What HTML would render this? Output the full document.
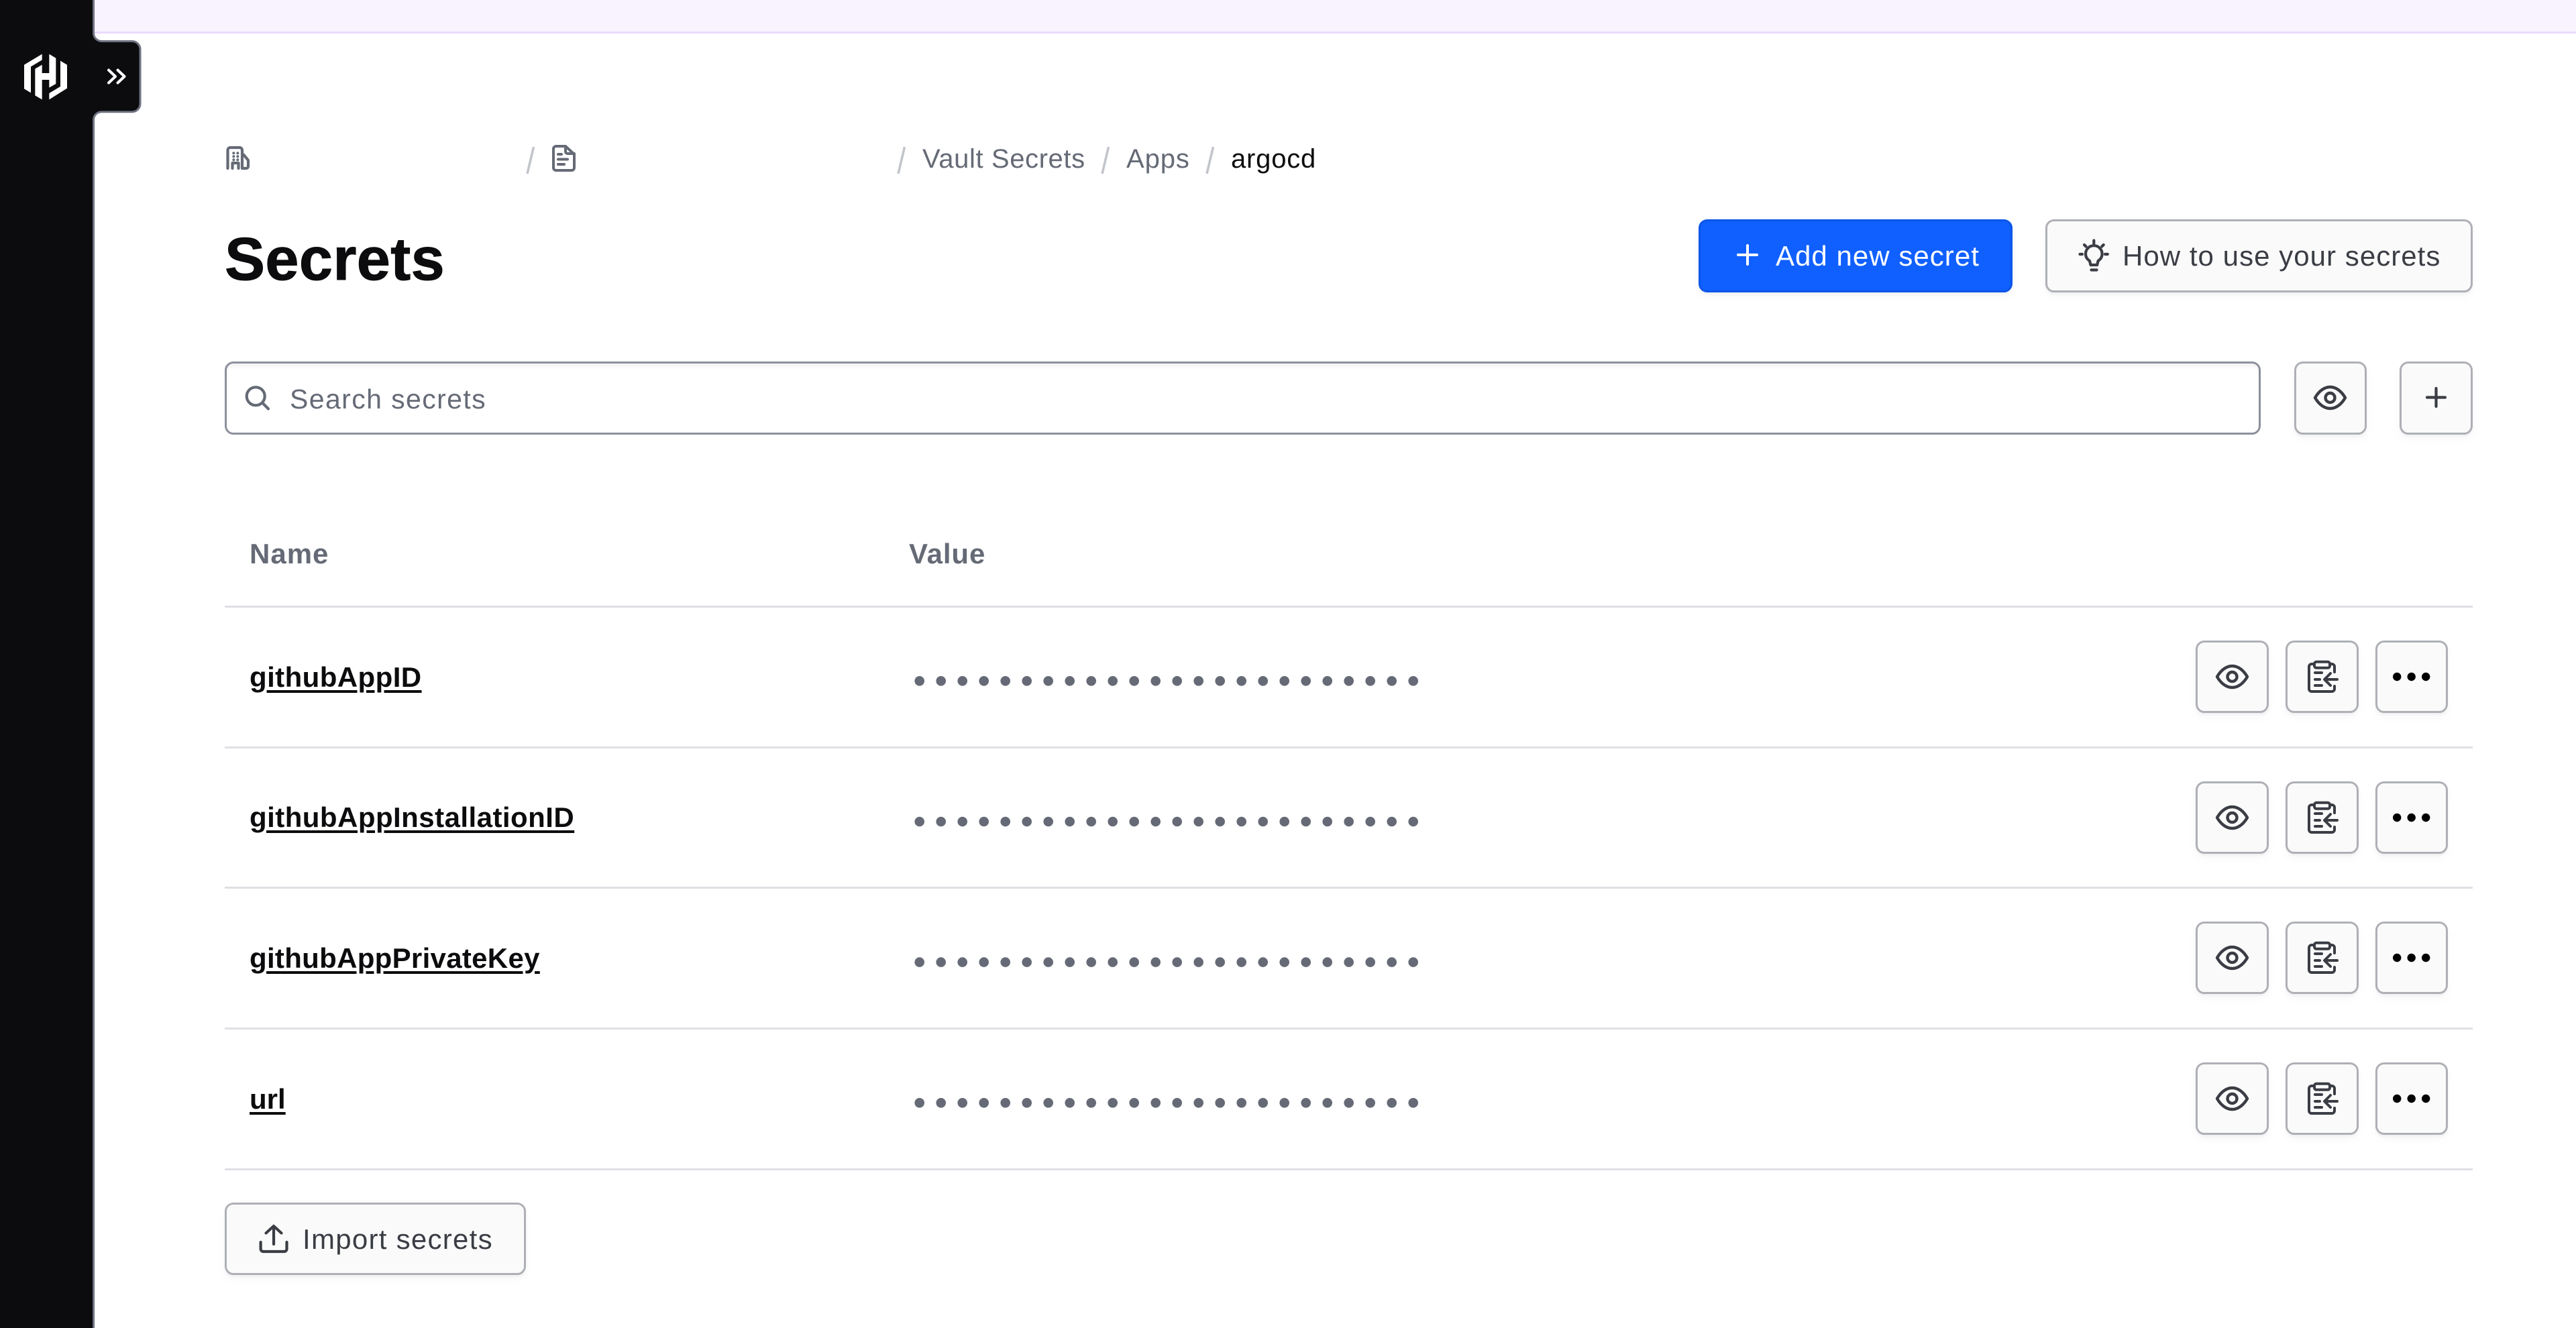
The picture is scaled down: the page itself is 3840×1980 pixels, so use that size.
<!DOCTYPE html>
<html lang="en">
<head>
<meta charset="utf-8">
<title>Secrets</title>
<style>
html,body{margin:0;padding:0;background:#fff}
body{position:relative;width:3840px;height:1980px;overflow:hidden;font-family:"Liberation Sans",sans-serif}
.a{position:absolute;box-sizing:border-box}
.t{position:absolute;line-height:0;white-space:nowrap}
.btn{position:absolute;box-sizing:border-box;background:#fafafa;border:3px solid #aeb0b6;border-radius:13px;box-shadow:0 3px 3px rgba(101,106,118,.06),0 7px 12px rgba(101,106,118,.04)}
.line{position:absolute;left:335px;width:3351px;height:3px;background:#dfe0e4}
.nm{font-size:42px;font-weight:bold;color:#0c0c0e;text-decoration:underline;text-decoration-thickness:4px;text-underline-offset:5px}
.th{font-size:42px;font-weight:bold;color:#656a76}
.bc{font-size:40px;color:#656a76}
.lb{font-size:42px;color:#3b3d45}
svg.o{position:absolute;left:0;top:0}
</style>
</head>
<body>
<div class="a" style="left:141px;top:0;width:3699px;height:50px;background:#f8f3ff;border-bottom:3px solid #ebdbfc"></div>

<span class="t bc" style="left:1375px;top:237px;letter-spacing:.6px">Vault Secrets</span>
<span class="t bc" style="left:1679px;top:237px;letter-spacing:.9px">Apps</span>
<span class="t bc" style="left:1835px;top:237px;letter-spacing:.8px;color:#0c0c0e">argocd</span>

<span class="t" style="left:335px;top:387px;font-size:90px;font-weight:bold;color:#0c0c0e;letter-spacing:.4px;-webkit-text-stroke:1px #0c0c0e">Secrets</span>

<div class="btn" style="left:2532px;top:327px;width:468px;height:109px;background:#1060ff;border-color:#0c56e9"></div>
<span class="t" style="left:2647px;top:381.5px;font-size:42px;color:#fff;letter-spacing:1.03px">Add new secret</span>
<div class="btn" style="left:3049px;top:327px;width:637px;height:109px"></div>
<span class="t lb" style="left:3164px;top:381.5px;letter-spacing:1.04px">How to use your secrets</span>

<div class="a" style="left:335px;top:539px;width:3035px;height:109px;background:#fff;border:3px solid #8c909c;border-radius:13px;box-shadow:inset 0 8px 5px -3px rgba(101,106,118,.07),inset 3px 0 3px -2px rgba(101,106,118,.04)"></div>
<span class="t" style="left:432px;top:594.8px;font-size:41px;color:#656a76;letter-spacing:1.4px">Search secrets</span>
<div class="btn" style="left:3420px;top:539px;width:108px;height:109px"></div>
<div class="btn" style="left:3577px;top:539px;width:109px;height:109px"></div>

<span class="t th" style="left:372px;top:825.5px;letter-spacing:1px">Name</span>
<span class="t th" style="left:1355px;top:825.5px;letter-spacing:.9px">Value</span>
<div class="line" style="top:903px"></div>
<div class="line" style="top:1113px"></div>
<div class="line" style="top:1322px"></div>
<div class="line" style="top:1532px"></div>
<div class="line" style="top:1742px"></div>

<span class="t nm" style="left:372px;top:1009.5px;letter-spacing:.42px">githubAppID</span>
<span class="t nm" style="left:372px;top:1219px;letter-spacing:.46px">githubAppInstallationID</span>
<span class="t nm" style="left:372px;top:1429px;letter-spacing:.3px">githubAppPrivateKey</span>
<span class="t nm" style="left:372px;top:1638.5px">url</span>

<div class="btn" style="left:3273px;top:955px;width:109px;height:108px"></div>
<div class="btn" style="left:3407px;top:955px;width:109px;height:108px"></div>
<div class="btn" style="left:3541px;top:955px;width:108px;height:108px"></div>
<div class="btn" style="left:3273px;top:1165px;width:109px;height:108px"></div>
<div class="btn" style="left:3407px;top:1165px;width:109px;height:108px"></div>
<div class="btn" style="left:3541px;top:1165px;width:108px;height:108px"></div>
<div class="btn" style="left:3273px;top:1374px;width:109px;height:108px"></div>
<div class="btn" style="left:3407px;top:1374px;width:109px;height:108px"></div>
<div class="btn" style="left:3541px;top:1374px;width:108px;height:108px"></div>
<div class="btn" style="left:3273px;top:1584px;width:109px;height:108px"></div>
<div class="btn" style="left:3407px;top:1584px;width:109px;height:108px"></div>
<div class="btn" style="left:3541px;top:1584px;width:108px;height:108px"></div>

<div class="btn" style="left:335px;top:1793px;width:449px;height:108px"></div>
<span class="t lb" style="left:451px;top:1847.5px;letter-spacing:1.27px">Import secrets</span>

<svg class="o" width="3840" height="1980" viewBox="0 0 3840 1980" fill="none" stroke-linecap="round" stroke-linejoin="round">
<defs>
<g id="eye" stroke="#3b3d45" stroke-width="4.4">
<path d="M-22.5 0C-17-9.5-9-16 0-16S17-9.5 22.5 0C17 9.5 9 16 0 16S-17 9.5-22.5 0Z"/>
<circle r="7"/>
</g>
<g id="clip" stroke="#3b3d45" stroke-width="4">
<path d="M10 5H6a4 4 0 0 0-4 4V42a4 4 0 0 0 4 4H36a4 4 0 0 0 4-4V38M40 17V9a4 4 0 0 0-4-4H33"/>
<rect x="10" y="1.8" width="23" height="9" rx="3"/>
<path d="M11 18H21M11 28H18M11 37H21M44 28H26M34 19L25 28L34 37"/>
</g>
<g id="dots"><circle cx="-21.5" r="6.2" fill="#000"/><circle r="6.2" fill="#000"/><circle cx="21.5" r="6.2" fill="#000"/></g>
<line id="mask" x1="0" y1="0" x2="737" y2="0" stroke="#656a76" stroke-width="14.6" stroke-linecap="round" stroke-dasharray="0 32"/>
</defs>

<path d="M-3-3H139.5V49.5a12 12 0 0 0 12 12H197a12 12 0 0 1 12 12V154.7a12 12 0 0 1-12 12H151.5a12 12 0 0 0-12 12V1983H-3Z" fill="#0c0c0e" stroke="#6f7280" stroke-width="3" stroke-linejoin="miter"/>
<g transform="translate(0 40) scale(.33333)" fill="#fff" stroke="none">
<polygon points="188,122 188,148 138,178 138,295 108,277 108,170"/>
<polygon points="157,188 188,170 188,207 220,207 220,122 250,140 250,255 220,272 220,237 188,237 188,325 157,307"/>
<polygon points="220,325 220,297 270,267 270,152 300,170 300,275"/>
</g>
<path d="M162 104.5L172 114L162 123.5M175.5 104.5L185.5 114L175.5 123.5" stroke="#fff" stroke-width="4"/>

<!-- building -->
<g transform="translate(337 218)" stroke="#656a76" stroke-width="4.2">
<path d="M2.5 33V6a4 4 0 0 1 4-4H20a4 4 0 0 1 4 4V33M26 12.5L33 21V30a3 3 0 0 1-3 3H26M9.5 33V25H18.5V33"/>
<g fill="#656a76" stroke="none"><circle cx="11.3" cy="10.3" r="2"/><circle cx="17.3" cy="10.3" r="2"/><circle cx="11.3" cy="15.3" r="2"/><circle cx="17.3" cy="15.3" r="2"/><circle cx="11.3" cy="20.3" r="2"/><circle cx="17.3" cy="20.3" r="2"/></g>
</g>
<!-- slashes -->
<g stroke="#c2c5cb" stroke-width="3.6" stroke-linecap="butt">
<path d="M795.5 219L786 259M1348.5 219L1339 259M1652.5 219L1643 259M1808.5 219L1799 259"/>
</g>
<!-- document -->
<g transform="translate(823 216)" stroke="#656a76" stroke-width="4">
<path d="M6 2H20L33 14V34a4 4 0 0 1-4 4H6a4 4 0 0 1-4-4V6a4 4 0 0 1 4-4Z"/>
<path d="M20 2V10a3 3 0 0 0 3 3H33M9 14H14M9 21.5H23M9 29H18"/>
</g>

<!-- add button plus -->
<path d="M2605 366V394M2591 380H2619" stroke="#fff" stroke-width="4"/>
<!-- lightbulb -->
<g stroke="#3b3d45" stroke-width="4.2">
<path d="M3121.3 358.5V363M3107 365L3109.5 367.5M3135.7 365L3133.2 367.5M3100.5 379H3104M3138 379H3141.8M3117.5 402.5H3125.5"/>
<path d="M3116.5 395L3115 389C3109 385 3109 380 3109 378.5A12.3 12.3 0 0 1 3133.6 378.5C3133.6 380 3133.6 385 3127.6 389L3126.2 395Z"/>
</g>
<!-- search -->
<g stroke="#656a76" stroke-width="4.2"><circle cx="381.2" cy="590.8" r="13.5"/><path d="M391.5 601L400 609.5"/></g>
<use href="#eye" transform="translate(3473.5 593)"/>
<path d="M3631.5 579V606M3618 592.5H3645" stroke="#3b3d45" stroke-width="4.2"/>

<!-- rows -->
<use href="#mask" transform="translate(1370.7 1015.3)"/>
<use href="#mask" transform="translate(1370.7 1225)"/>
<use href="#mask" transform="translate(1370.7 1434.6)"/>
<use href="#mask" transform="translate(1370.7 1644.3)"/>

<use href="#eye" transform="translate(3327.5 1009)"/>
<use href="#clip" transform="translate(3440 985)"/>
<use href="#dots" transform="translate(3594.7 1009)"/>
<use href="#eye" transform="translate(3327.5 1219)"/>
<use href="#clip" transform="translate(3440 1195)"/>
<use href="#dots" transform="translate(3594.7 1219)"/>
<use href="#eye" transform="translate(3327.5 1428)"/>
<use href="#clip" transform="translate(3440 1404)"/>
<use href="#dots" transform="translate(3594.7 1428)"/>
<use href="#eye" transform="translate(3327.5 1638)"/>
<use href="#clip" transform="translate(3440 1614)"/>
<use href="#dots" transform="translate(3594.7 1638)"/>

<!-- import -->
<g stroke="#3b3d45" stroke-width="4.2">
<path d="M408 1828V1855M396.5 1838.5L408 1828L419.5 1838.5"/>
<path d="M388.6 1852V1862a4 4 0 0 0 4 4H423.5a4 4 0 0 0 4-4V1852"/>
</g>
</svg>
</body>
</html>
